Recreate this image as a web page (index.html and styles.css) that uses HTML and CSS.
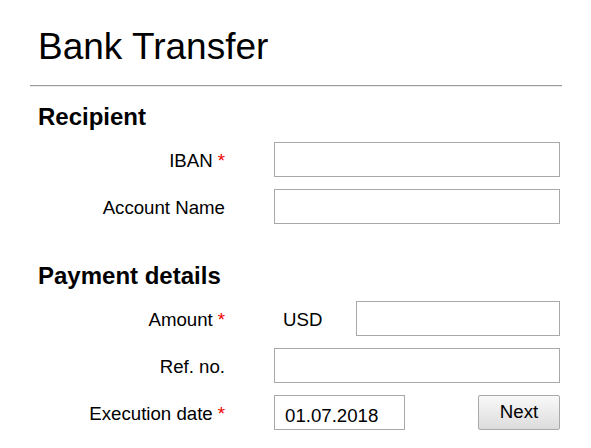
FILE: index.html
```html
<!DOCTYPE html>
<html lang="en">
<head>
<meta charset="utf-8">
<title>Bank Transfer</title>
<link rel="stylesheet" href="styles.css">
</head>
<body>
<main class="page">
  <h1 class="title">Bank Transfer</h1>
  <hr class="rule">
  <section class="section">
    <h2 class="heading">Recipient</h2>
    <div class="form">
      <label class="label">IBAN <span class="req">*</span></label>
      <div class="field"><input class="input" type="text"></div>
      <label class="label">Account Name</label>
      <div class="field"><input class="input" type="text"></div>
    </div>
  </section>
  <section class="section section-second">
    <h2 class="heading">Payment details</h2>
    <div class="form form-tight">
      <label class="label">Amount <span class="req">*</span></label>
      <div class="field">
        <span class="currency">USD</span>
        <input class="input input-amount" type="text">
      </div>
      <label class="label">Ref. no.</label>
      <div class="field"><input class="input" type="text"></div>
      <label class="label">Execution date <span class="req">*</span></label>
      <div class="field field-split">
        <input class="input input-date" type="text" value="01.07.2018">
        <button class="button" type="button">Next</button>
      </div>
    </div>
  </section>
</main>
</body>
</html>
```
FILE: styles.css
```css
html, body {
  margin: 0;
  padding: 0;
  background: #ffffff;
}

body {
  font-family: "Liberation Sans", Arial, sans-serif;
  color: #000000;
}

.page {
  padding: 0 29px 0 30px;
}

.title {
  margin: 26px 0 0 0;
  padding-left: 8px;
  font-size: 37px;
  font-weight: normal;
  line-height: 41px;
}

.rule {
  margin: 18px 0 0 0;
  height: 0;
  border: 0;
  border-top: 1px solid #9a9a9a;
  border-bottom: 1px solid #ececec;
}

.section {
  padding: 0 2px 0 8px;
}

.heading {
  margin: 16px 0 0 0;
  font-size: 24px;
  font-weight: bold;
  line-height: 28px;
}

.section-second .heading {
  margin-top: 38px;
}

.form {
  display: grid;
  grid-template-columns: 187px minmax(0, 1fr);
  column-gap: 49px;
  row-gap: 12px;
  grid-auto-rows: 35px;
  margin-top: 11px;
}

.form-tight {
  margin-top: 11px;
}

.label {
  display: flex;
  align-items: center;
  justify-content: flex-end;
  gap: 5px;
  padding-top: 2px;
  font-size: 18.67px;
}

.req {
  color: #ee0000;
}

.field {
  display: flex;
  align-items: stretch;
  min-width: 0;
}

.input {
  box-sizing: border-box;
  flex: 1 1 0;
  width: 0;
  min-width: 0;
  height: 35px;
  margin: 0;
  padding: 0 10px;
  border: 1px solid #a9a9a9;
  border-radius: 0;
  background: #ffffff;
  font-family: "Liberation Sans", Arial, sans-serif;
  font-size: 18.67px;
  color: #000000;
  outline: none;
}

.currency {
  box-sizing: border-box;
  flex: 0 0 82px;
  padding: 2px 0 0 9px;
  display: flex;
  align-items: center;
  font-size: 18.67px;
}

.field-split {
  justify-content: space-between;
}

.input-date {
  flex: 0 0 131px;
  width: 131px;
  padding-top: 7px;
}

.button {
  box-sizing: border-box;
  flex: 0 0 82px;
  width: 82px;
  height: 35px;
  margin: 0;
  padding: 0 0 1px 0;
  border: 1px solid #a9a9a9;
  border-radius: 2px;
  background: linear-gradient(#f9f9f9, #dcdcdc);
  font-family: "Liberation Sans", Arial, sans-serif;
  font-size: 18.67px;
  color: #000000;
}
```
